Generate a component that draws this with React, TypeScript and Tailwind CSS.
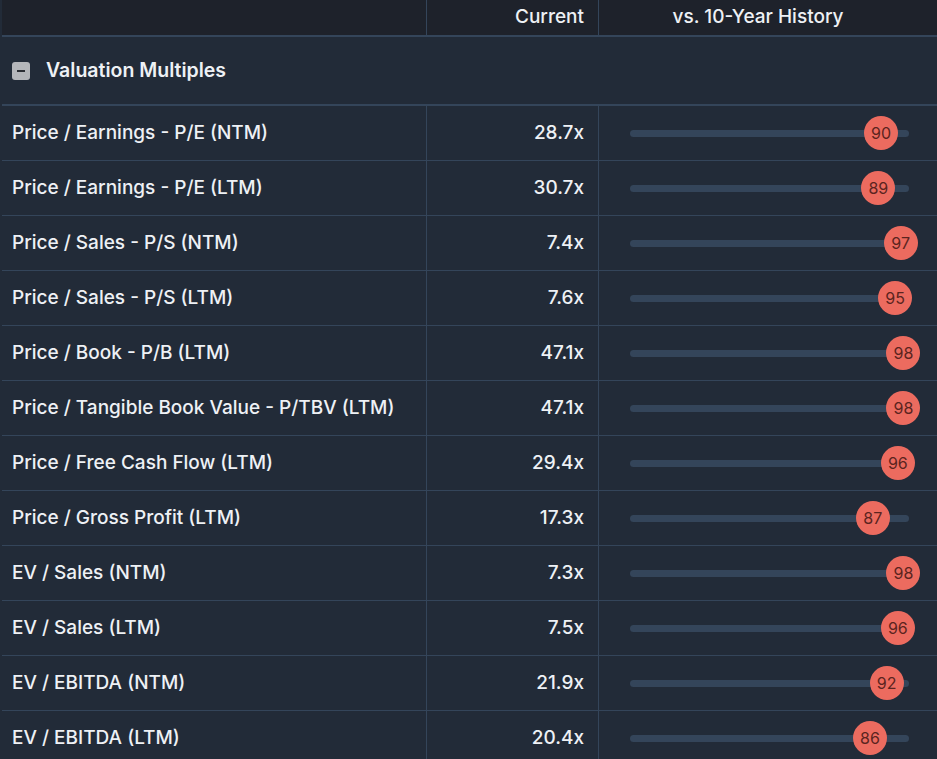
const rows: [string, string, number][] = [
  ["Price / Earnings - P/E (NTM)", "28.7x", 90],
  ["Price / Earnings - P/E (LTM)", "30.7x", 89],
  ["Price / Sales - P/S (NTM)", "7.4x", 97],
  ["Price / Sales - P/S (LTM)", "7.6x", 95],
  ["Price / Book - P/B (LTM)", "47.1x", 98],
  ["Price / Tangible Book Value - P/TBV (LTM)", "47.1x", 98],
  ["Price / Free Cash Flow (LTM)", "29.4x", 96],
  ["Price / Gross Profit (LTM)", "17.3x", 87],
  ["EV / Sales (NTM)", "7.3x", 98],
  ["EV / Sales (LTM)", "7.5x", 96],
  ["EV / EBITDA (NTM)", "21.9x", 92],
  ["EV / EBITDA (LTM)", "20.4x", 86],
];

export default function App() {
  return (
    <div
      className="h-[759px] w-[937px] overflow-hidden bg-[#222b38] pl-[2px] text-[#eef1f5]"
      style={{ fontFamily: "Inter, 'Liberation Sans', sans-serif" }}
    >
      <div className="grid h-[37px] grid-cols-[425px_172px_1fr] border-b-2 border-[#34455a] bg-[#1e222b] text-[19px] font-medium">
        <div className="border-r border-[#34455a]" />
        <div className="flex items-center justify-end border-r border-[#34455a] pr-[14px]">Current</div>
        <div className="flex items-center justify-center pr-[20px]">vs. 10-Year History</div>
      </div>
      <div className="flex h-[69px] items-center gap-[16px] border-b-2 border-[#34455a] pl-[10px] text-[19.5px] font-semibold">
        <div className="flex h-[18px] w-[18px] items-center justify-center rounded-[3px] bg-[#b4b6ba]">
          <div className="h-[2px] w-[8px] bg-[#2a2d33]" />
        </div>
        Valuation Multiples
      </div>
      {rows.map(([label, cur, v]) => (
        <div key={label} className="grid h-[55px] grid-cols-[425px_172px_1fr] border-b border-[#34455a] text-[19px] font-medium">
          <div className="flex items-center border-r border-[#34455a] pl-[10px]">{label}</div>
          <div className="flex items-center justify-end border-r border-[#34455a] pr-[14px]">{cur}</div>
          <div className="flex items-center pl-[31px]">
            <div className="relative h-[7px] w-[279px] rounded-full bg-[#34455a]">
              <div
                className="absolute top-1/2 flex h-[34px] w-[34px] -translate-x-1/2 -translate-y-1/2 items-center justify-center rounded-full bg-[#ec6b5f] text-[16px] font-normal text-[#5b2420]"
                style={{ left: `${v * 2.79}px` }}
              >
                {v}
              </div>
            </div>
          </div>
        </div>
      ))}
    </div>
  );
}
